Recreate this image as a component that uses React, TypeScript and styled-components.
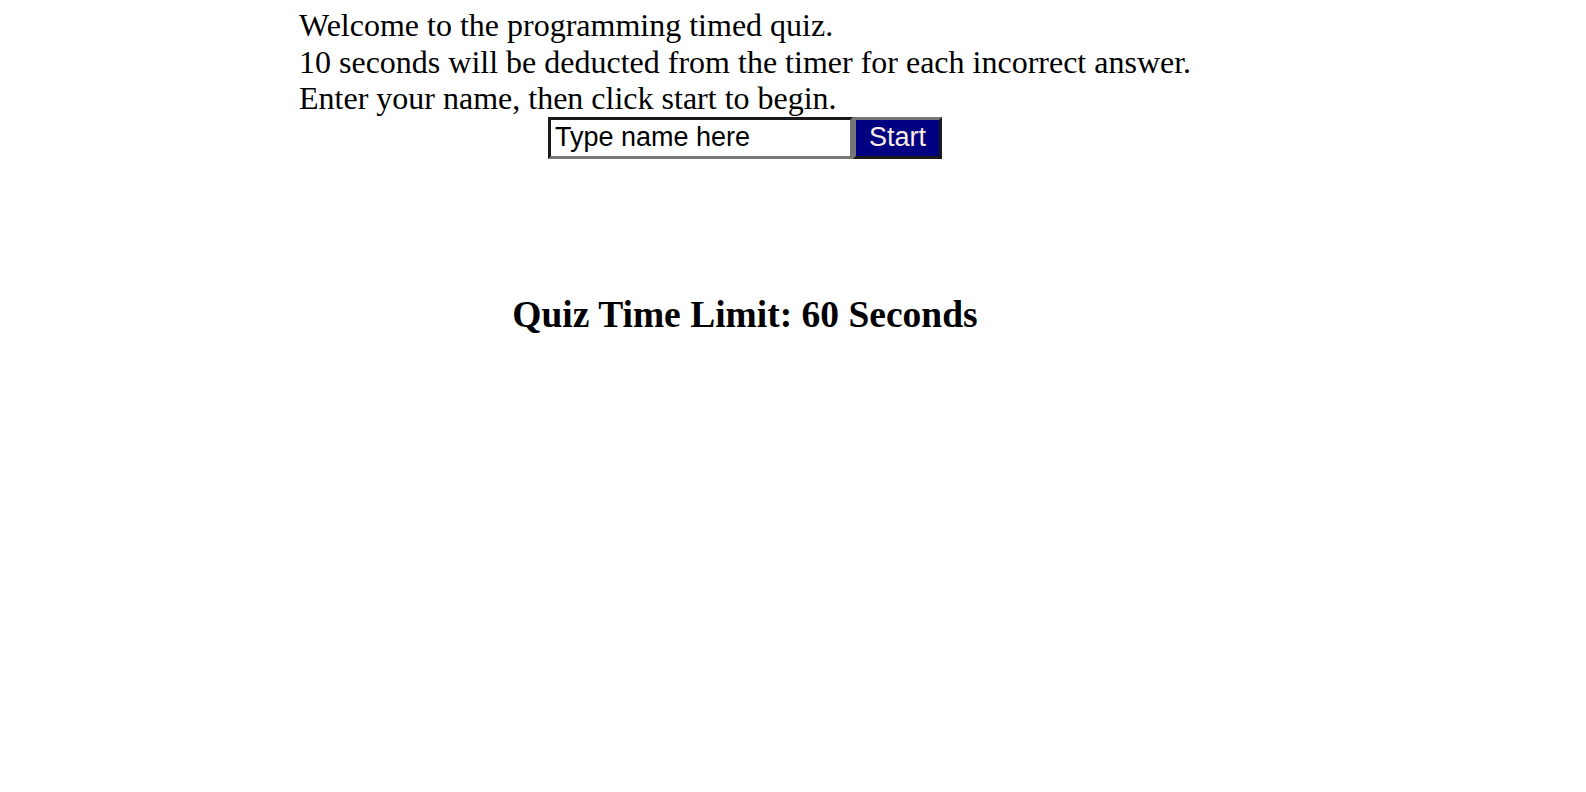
import React from "react";
import styled, { createGlobalStyle } from "styled-components";

const GlobalStyle = createGlobalStyle`
  html, body { margin: 0; padding: 0; background: #ffffff; }
  body { font-family: "Liberation Serif", "Times New Roman", serif; color: #000; }
`;

const Page = styled.main`
  display: flex;
  flex-direction: column;
  width: 892px;
  margin-left: 299px;
  padding-top: 6px;
`;

const Intro = styled.div`
  font-size: 32px;
  line-height: 36.5px;
  white-space: nowrap;
  padding-top: 1px;
`;

const StartRow = styled.form`
  display: flex;
  justify-content: center;
  align-items: stretch;
  margin: 0;
`;

const NameInput = styled.input`
  box-sizing: border-box;
  width: 305px;
  height: 42px;
  margin: 0;
  padding: 0 4px;
  font-family: "Liberation Sans", Arial, sans-serif;
  font-size: 27px;
  color: #000;
  background: #fff;
  border: 3px solid;
  border-color: #1a1a1a #767676 #767676 #1a1a1a;
  outline: none;
  &::placeholder { color: #000; opacity: 1; }
`;

const StartButton = styled.button`
  box-sizing: border-box;
  width: 89px;
  height: 42px;
  margin: 0;
  padding: 0;
  font-family: "Liberation Sans", Arial, sans-serif;
  font-size: 27px;
  color: #fbeee0;
  background: #000080;
  border: 3px solid;
  border-color: #767676 #1a1a1a #1a1a1a #767676;
  cursor: pointer;
`;

const Heading = styled.h1`
  margin: 134px 0 0;
  font-size: 37.5px;
  line-height: 43px;
  font-weight: bold;
  text-align: center;
`;

export default function App() {
  return (
    <>
      <GlobalStyle />
      <Page>
        <Intro>
          Welcome to the programming timed quiz.
          <br />
          10 seconds will be deducted from the timer for each incorrect answer.
          <br />
          Enter your name, then click start to begin.
        </Intro>
        <StartRow onSubmit={(e) => e.preventDefault()}>
          <NameInput type="text" placeholder="Type name here" />
          <StartButton type="submit">Start</StartButton>
        </StartRow>
        <Heading>Quiz Time Limit: 60 Seconds</Heading>
      </Page>
    </>
  );
}
